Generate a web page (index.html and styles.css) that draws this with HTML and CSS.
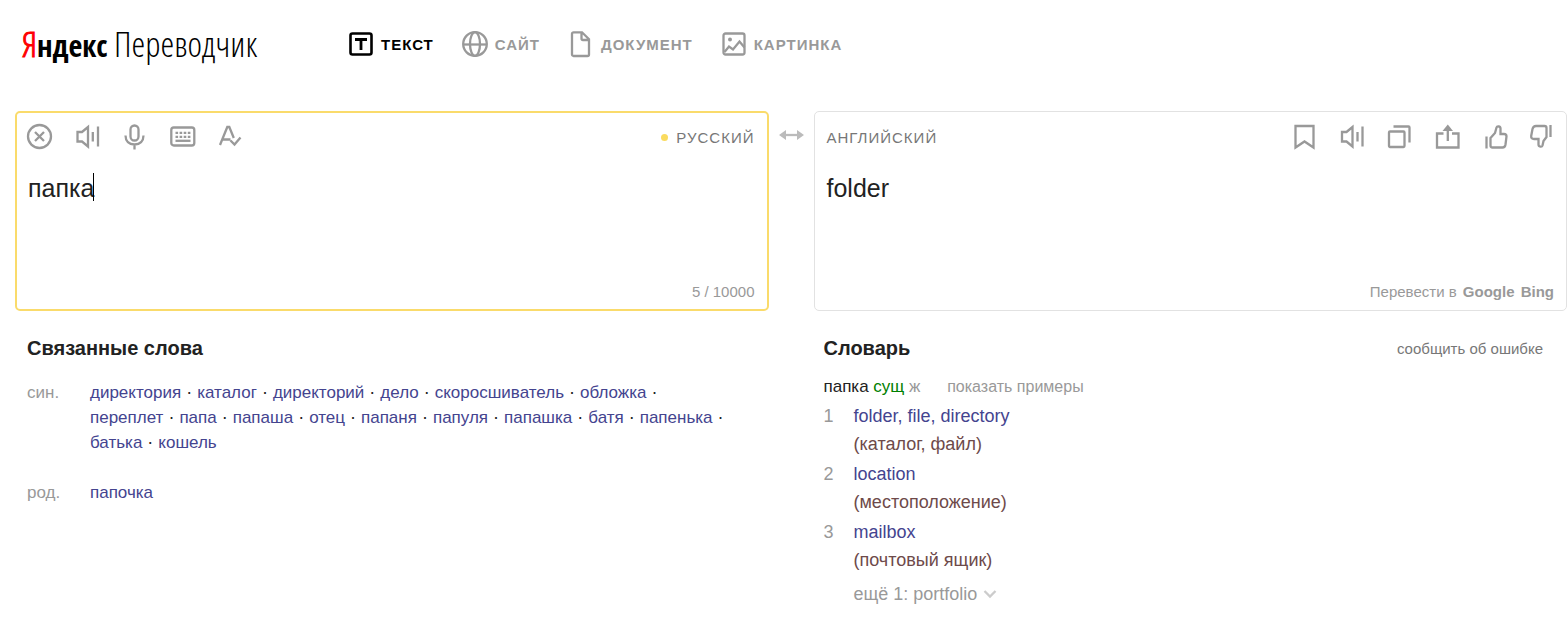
FILE: index.html
```html
<!DOCTYPE html>
<html lang="ru">
<head>
  <meta charset="UTF-8">
  <meta name="viewport" content="width=device-width, initial-scale=1.0">
  <title>Яндекс Переводчик</title>
  <link rel="stylesheet" href="styles.css">
</head>
<body>

  <!-- Header -->
  <header class="header">
    <a class="logo" href="#"><span class="logo-red">Я</span><span class="logo-brand">ндекс</span> Переводчик</a>
    <nav class="tabs">
      <a class="tab active" href="#text">
        <svg width="24" height="24" viewBox="0 0 24 24"><rect x="1.500" y="1.500" width="21" height="21" rx="2" stroke-width="2.6"/><path d="M6 7.500h12M12 7.500V18" stroke-width="2.8"/></svg>
        ТЕКСТ
      </a>
      <a class="tab" href="#site">
        <svg width="24" height="26" viewBox="0 -1 24 26"><circle cx="12" cy="12" r="11.800"/><ellipse cx="12" cy="12" rx="5" ry="11.800"/><path d="M0 12.500h24"/></svg>
        САЙТ
      </a>
      <a class="tab" href="#document">
        <svg width="24" height="26" viewBox="0 -1 24 26"><path d="M4.500 .3h8.500L20 7.300V22.500a1.500 1.500 0 0 1-1.500 1.500h-14A1.500 1.500 0 0 1 3 22.500V1.800A1.500 1.500 0 0 1 4.500 .3zM12.500 .3V6.500A1.500 1.500 0 0 0 14 8H20"/></svg>
        ДОКУМЕНТ
      </a>
      <a class="tab" href="#image">
        <svg width="24" height="24" viewBox="0 0 24 24"><rect x="1.500" y="1.500" width="21" height="21" rx="2"/><circle class="solid" cx="8" cy="7.500" r="2"/><path d="M2.500 20L7 14.500l4 3 6.500-8 5 6"/></svg>
        КАРТИНКА
      </a>
    </nav>
  </header>

  <main class="translator">
    <!-- Source text -->
    <section class="box source">
      <div class="toolbar">
        <button type="button" aria-label="Очистить"><svg width="26" height="26" viewBox="0 0 26 26"><circle cx="13.500" cy="12.500" r="11.500"/><path d="M9 8l9 9M18 8l-9 9"/></svg></button>
        <button type="button" aria-label="Прослушать"><svg width="26" height="26" viewBox="0 0 26 26"><path d="M3.500 8h4.500L14 3v19.500L8 17.500H3.500zM18.800 8v9.500M24 2.500v20"/></svg></button>
        <button type="button" aria-label="Голосовой ввод"><svg width="26" height="26" viewBox="0 0 26 26"><rect x="8.500" y="1.500" width="8" height="15" rx="4"/><path d="M3.500 11.500c0 5.500 3.500 9 9 9s9-3.500 9-9M12.500 20.500v5"/></svg></button>
        <button type="button" aria-label="Клавиатура"><svg width="26" height="26" viewBox="0 0 26 26"><rect x="1.300" y="3.500" width="23" height="18" rx="2.500"/><path d="M5.500 8.800h15M5.500 12.800h15" stroke-dasharray="2.600 1.500"/><path d="M5.500 16.800h15"/></svg></button>
        <button type="button" aria-label="Проверка правописания"><svg width="26" height="26" viewBox="0 0 26 26"><path d="M2 21L9.300 3h2l4.500 11M4.500 15.500h8M12.500 16.500l4 4 6-7"/></svg></button>
        <button type="button" class="lang lang-source">РУССКИЙ</button>
      </div>
      <div class="field">
        <textarea class="text" aria-label="Исходный текст" rows="1">папка</textarea>
        <span class="caret"></span>
      </div>
      <div class="box-footer">5 / 10000</div>
    </section>

    <button type="button" class="swap" aria-label="Поменять языки"><svg width="25" height="12" viewBox="0 0 25 12"><path d="M5 6h15"/><path class="solid" d="M0 6l7-5v10zM25 6l-7-5v10z"/></svg></button>

    <!-- Translation -->
    <section class="box target">
      <div class="toolbar">
        <button type="button" class="lang lang-target">АНГЛИЙСКИЙ</button>
        <button type="button" aria-label="В избранное"><svg width="26" height="26" viewBox="0 0 26 26"><path d="M4.500 2h18v21.500l-9-6-9 6z"/></svg></button>
        <button type="button" aria-label="Прослушать перевод"><svg width="26" height="26" viewBox="0 0 26 26"><path d="M3 8h4.500L13.500 3v19.500l-6-5H3zM18.500 8v9.500M23.500 2.500v20"/></svg></button>
        <button type="button" aria-label="Копировать"><svg width="26" height="26" viewBox="0 0 26 26"><rect x="2" y="7.500" width="15.500" height="15.500" rx="1"/><path d="M6.500 2.500h15a1 1 0 0 1 1 1v15"/></svg></button>
        <button type="button" aria-label="Поделиться"><svg width="26" height="26" viewBox="0 0 26 26"><path d="M8.500 9.500H2v14h21.500v-14H17M12.800 5v12"/><path class="solid" d="M7.500 7L12.800.5 18 7z"/></svg></button>
        <button type="button" aria-label="Хороший перевод"><svg width="26" height="26" viewBox="0 0 26 26"><path d="M3.500 12.500v12M7.500 14L12 9l1.500-5.500c.5-1.500 4-1.500 4 1V10H21c1.800 0 2.500 1 2.500 2.500l-1 8c-.3 2-1.300 3-3 3h-10c-1.200 0-2-.8-2-2z"/></svg></button>
        <button type="button" aria-label="Плохой перевод"><svg width="22" height="26" viewBox="0 0 22 26"><path d="M19.500 1v12M15.500 13l-3 4-1 4.500c-.5 1.800-4 1.500-4-1V15H3c-2 0-3-1-2.800-3L1.500 5C2 3 3 2 5 2h8.500c1.300 0 2 .8 2 2z"/></svg></button>
      </div>
      <p class="text">folder</p>
      <div class="box-footer">Перевести в <a href="#google">Google</a> <a href="#bing">Bing</a></div>
    </section>

    <!-- Related words -->
    <section class="related">
      <h2>Связанные слова</h2>
      <dl class="words">
        <dt>син.</dt>
        <dd>
          <a href="#">директория</a> · <a href="#">каталог</a> · <a href="#">директорий</a> · <a href="#">дело</a> · <a href="#">скоросшиватель</a> · <a href="#">обложка</a> · <br><a href="#">переплет</a> · <a href="#">папа</a> · <a href="#">папаша</a> · <a href="#">отец</a> · <a href="#">папаня</a> · <a href="#">папуля</a> · <a href="#">папашка</a> · <a href="#">батя</a> · <a href="#">папенька</a> · <br><a href="#">батька</a> · <a href="#">кошель</a>
        </dd>
        <dt>род.</dt>
        <dd><a href="#">папочка</a></dd>
      </dl>
    </section>

    <!-- Dictionary -->
    <section class="dictionary">
      <div class="dictionary-head">
        <h2>Словарь</h2>
        <a class="report" href="#report">сообщить об ошибке</a>
      </div>
      <p class="entry">папка <span class="pos">сущ</span> <span class="gender">ж</span> <a class="examples" href="#examples">показать примеры</a></p>
      <ol class="meanings">
        <li><span class="num">1</span><div><span class="terms"><a href="#">folder</a>, <a href="#">file</a>, <a href="#">directory</a></span><br><span class="hint">(каталог, файл)</span></div></li>
        <li><span class="num">2</span><div><span class="terms"><a href="#">location</a></span><br><span class="hint">(местоположение)</span></div></li>
        <li><span class="num">3</span><div><span class="terms"><a href="#">mailbox</a></span><br><span class="hint">(почтовый ящик)</span></div></li>
      </ol>
      <button type="button" class="more">ещё 1: portfolio <svg width="14" height="10" viewBox="0 0 14 10"><path d="M1.500 2L7 7.500 12.500 2"/></svg></button>
    </section>
  </main>

</body>
</html>
```
FILE: styles.css
```css
* {
  box-sizing: border-box;
}
body {
  margin: 0;
  background-color: #fff;
  color: #222;
  font-family: "Liberation Sans", Arial, sans-serif;
  font-size: 18px;
}
a {
  color: #44448f;
  text-decoration: none;
}
p, h2, dl, dd, ol {
  margin: 0;
  padding: 0;
}
button {
  border: none;
  padding: 0;
  background: none;
  color: #999;
  font: inherit;
  cursor: pointer;
}
svg {
  display: block;
  flex: none;
  overflow: visible;
  fill: none;
  stroke: currentColor;
  stroke-width: 2.3;
}
.solid {
  fill: currentColor;
  stroke: none;
}

/* Header */
.header {
  display: flex;
  align-items: center;
  padding: 20px 0 43px 22px;
}
.logo {
  flex: 0 0 327px;
  color: #000;
  font-family: "Open Sans Condensed Light", "Liberation Sans Narrow", "Liberation Sans", sans-serif;
  font-size: 35px;
  line-height: 48px;
  white-space: nowrap;
}
.logo-brand {
  font-family: "Open Sans Condensed", "Liberation Sans Narrow", sans-serif;
  font-size: 30px;
  font-weight: bold;
  line-height: 1;
}
.logo-red {
  color: #f00;
  -webkit-text-stroke: 1px #f00;
}
.tabs {
  display: flex;
  gap: 29px;
}
.tab {
  display: flex;
  align-items: center;
  gap: 8px;
  color: #999;
  font-size: 15px;
  font-weight: bold;
  letter-spacing: 1px;
}
.tab.active {
  color: #000;
}

/* Translator */
.translator {
  display: grid;
  grid-template-columns: 1fr 45px 1fr;
  padding-left: 15px;
}
.box {
  display: flex;
  flex-direction: column;
  min-height: 200px;
  border: 1px solid #e2e2e2;
  border-radius: 5px;
  padding: 12px 12px 8px;
}
.source {
  border: 2px solid #fadb6b;
  padding: 11px 12px 7px 9px;
}
.toolbar {
  display: flex;
  align-items: center;
  gap: 22px;
}
.target .toolbar {
  padding-right: 1px;
}
.lang {
  color: #777;
  font-size: 15px;
  letter-spacing: 1px;
}
.lang-source {
  display: flex;
  align-items: center;
  gap: 8px;
  margin-left: auto;
}
.lang-source::before {
  content: "";
  width: 7px;
  height: 7px;
  border-radius: 50%;
  background-color: #fadb5f;
}
.lang-target {
  margin-right: auto;
}
.field {
  position: relative;
  padding: 23px 0 0 2px;
}
.text {
  display: block;
  width: 100%;
  border: none;
  padding: 0;
  background: none;
  color: #222;
  font-family: inherit;
  font-size: 25px;
  line-height: 30px;
  resize: none;
  outline: none;
}
.target .text {
  margin-top: 23px;
}
.caret {
  position: absolute;
  top: 23px;
  left: 67px;
  width: 1px;
  height: 28px;
  background-color: #000;
}
.box-footer {
  margin-top: auto;
  color: #999;
  font-size: 15px;
  line-height: 20px;
  text-align: right;
}
.box-footer a {
  margin-left: 2px;
  color: #999;
  font-weight: bold;
}
.swap {
  display: flex;
  justify-content: center;
  align-self: start;
  padding-top: 18px;
  color: #bbb;
}

/* Related words */
h2 {
  font-size: 20px;
  line-height: 24px;
}
.related {
  padding: 25px 12px;
}
.words {
  display: grid;
  grid-template-columns: 63px 1fr;
  row-gap: 25px;
  margin-top: 20px;
  line-height: 25px;
}
.words a {
  font-size: 17px;
}
.words dt {
  color: #999;
  font-size: 17px;
}

/* Dictionary */
.dictionary {
  grid-column: 3;
  padding: 25px 24px 20px 10px;
}
.dictionary-head {
  display: flex;
  justify-content: space-between;
  align-items: center;
}
.report {
  color: #777;
  font-size: 15px;
}
.entry {
  margin-top: 13px;
  font-size: 17px;
  line-height: 28px;
}
.pos {
  color: #008000;
}
.gender {
  color: #999;
}
.examples {
  margin-left: 22px;
  color: #999;
  font-size: 16px;
}
.meanings {
  display: grid;
  row-gap: 2px;
  margin-top: 1px;
  line-height: 28px;
  list-style: none;
}
.meanings li {
  display: grid;
  grid-template-columns: 30px 1fr;
}
.num {
  color: #999;
}
.terms {
  color: #44448f;
}
.hint {
  color: #6e4a4a;
}
.more {
  display: flex;
  align-items: center;
  gap: 6px;
  margin-top: 6px;
  margin-left: 30px;
  line-height: 28px;
}
.more svg {
  color: #ccc;
}
```
